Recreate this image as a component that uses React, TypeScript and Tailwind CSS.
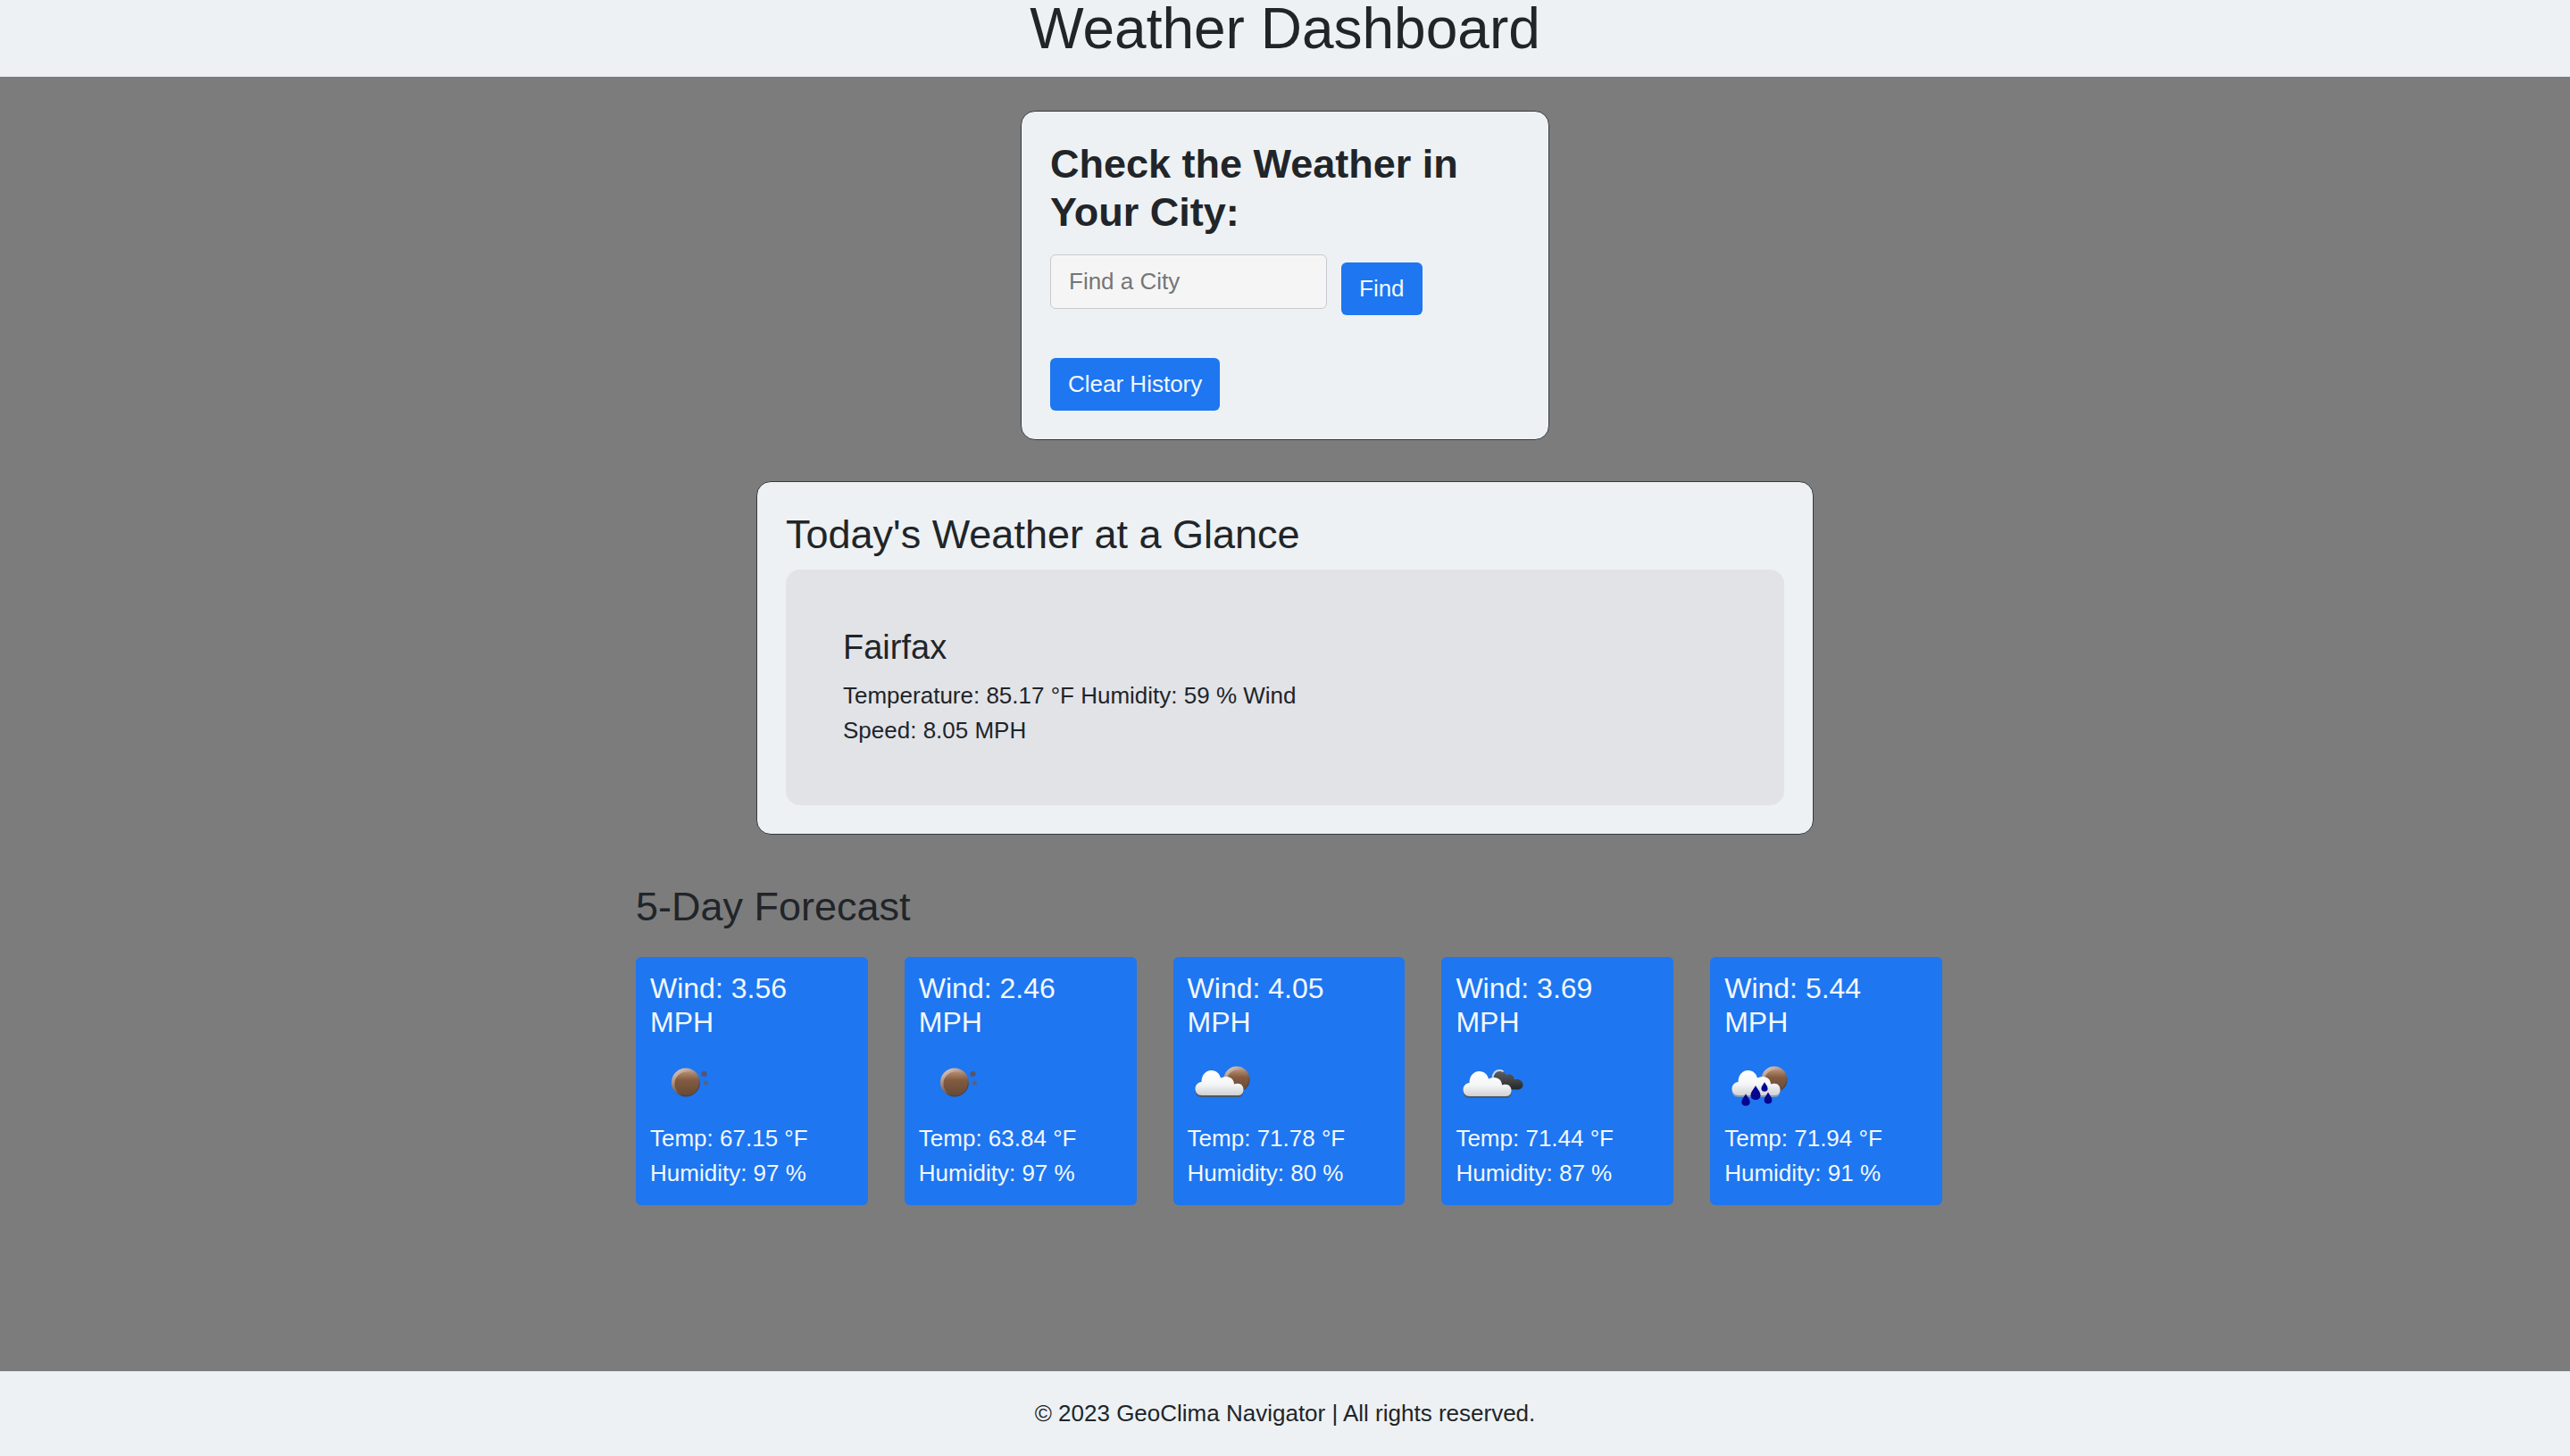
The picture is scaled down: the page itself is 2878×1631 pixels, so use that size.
import { useState } from "react";

type Sky = "clear" | "few" | "broken" | "rain";

const forecast: { wind: string; sky: Sky; label: string; temp: string; humidity: number }[] = [
  { wind: "3.56", sky: "clear", label: "Clear sky", temp: "67.15", humidity: 97 },
  { wind: "2.46", sky: "clear", label: "Clear sky", temp: "63.84", humidity: 97 },
  { wind: "4.05", sky: "few", label: "Few clouds", temp: "71.78", humidity: 80 },
  { wind: "3.69", sky: "broken", label: "Broken clouds", temp: "71.44", humidity: 87 },
  { wind: "5.44", sky: "rain", label: "Rain", temp: "71.94", humidity: 91 },
];

const CLOUD =
  "M16 55 C11 55 8.5 51.5 8.5 47.5 C8.5 43.5 11.5 40.5 15.5 40 C15.5 32.5 20 27 26.5 27 C32 27 35.5 30.5 37 35.5 C39 34.5 41 34 43 34 C48.5 34 52 38 52 42.5 C53 42 54.5 41.7 56 41.7 C60 41.7 62.5 44.5 62.5 48.5 C62.5 52 60.5 55 57 55 Z";

const DARK_CLOUD =
  "M43 48 C41.5 44 41 39 42.5 35 C43.5 30.5 46.5 28 50 28 C53.5 28 56 29.8 57 32.5 C58.2 31.3 59.8 31 61.500 31.500 C64 32.200 65.500 34.500 65.800 37.500 C70.500 36 75.500 39 75.500 43 C75.500 46.500 73 48.500 69 48.500 Z";

const DROP = "M0 -8 C2 -4 5.500 -1 5.500 3 C5.500 6.500 3 8 0 8 C-3 8 -5.500 6.500 -5.500 3 C-5.500 -1 -2 -4 0 -8 Z";

function Moon({ id, cx, cy, r }: { id: string; cx: number; cy: number; r: number }) {
  return (
    <g>
      <defs>
        <linearGradient id={`${id}-rim`} x1="0.1" y1="0" x2="0.6" y2="0.9">
          <stop offset="0" stopColor="#e6d3c8" />
          <stop offset="0.45" stopColor="#a98a78" />
          <stop offset="1" stopColor="#4e3a36" />
        </linearGradient>
        <linearGradient id={`${id}-face`} x1="0" y1="0" x2="0" y2="1">
          <stop offset="0" stopColor="#b58c6f" />
          <stop offset="0.35" stopColor="#835b40" />
          <stop offset="1" stopColor="#654936" />
        </linearGradient>
      </defs>
      <circle cx={cx} cy={cy} r={r} fill={`url(#${id}-rim)`} />
      <circle cx={cx + 1} cy={cy + 1.5} r={r - 2.5} fill={`url(#${id}-face)`} />
    </g>
  );
}

function Cloud({ id, wet }: { id: string; wet?: boolean }) {
  return (
    <g>
      <defs>
        <linearGradient id={`${id}-cloud`} x1="0" y1="0" x2="0" y2="1">
          <stop offset="0" stopColor="#ffffff" />
          <stop offset="0.55" stopColor="#f5f6f7" />
          <stop offset="1" stopColor="#cfd1d4" />
        </linearGradient>
      </defs>
      <path d={CLOUD} transform="translate(0 2)" fill={wet ? "#8299bd" : "#4d5768"} />
      <path d={CLOUD} fill={`url(#${id}-cloud)`} />
    </g>
  );
}

function WeatherIcon({ sky, id, label }: { sky: Sky; id: string; label: string }) {
  return (
    <svg viewBox="0 0 80 80" className="mt-2 mb-1 block size-20" role="img" aria-label={label}>
      {sky === "clear" && (
        <>
          <Moon id={id} cx={40} cy={40.5} r={16} />
          <circle cx="60.500" cy="31" r="3" fill="#5a5468" />
          <circle cx="62.500" cy="41" r="2.500" fill="#5c6080" />
        </>
      )}
      {sky === "few" && (
        <>
          <Moon id={id} cx={55} cy={37} r={14.5} />
          <Cloud id={id} />
        </>
      )}
      {sky === "broken" && (
        <>
          <defs>
            <linearGradient id={`${id}-dark`} x1="0" y1="0" x2="0" y2="1">
              <stop offset="0" stopColor="#5c5d5f" />
              <stop offset="0.6" stopColor="#3d3e40" />
              <stop offset="1" stopColor="#242628" />
            </linearGradient>
          </defs>
          <path d={DARK_CLOUD} fill={`url(#${id}-dark)`} />
          <path d="M41.500 36 C42 30 45 27 49.500 27 C51 27 52.500 27.500 53.500 28.500" fill="none" stroke="#cfd6de" strokeWidth="2" />
          <g transform="translate(0 1)">
            <Cloud id={id} />
          </g>
        </>
      )}
      {sky === "rain" && (
        <>
          <Moon id={id} cx={56} cy={37} r={14.5} />
          <Cloud id={id} wet />
          <g fill="#06068f">
            <path d={DROP} transform="translate(24 60) scale(0.85)" />
            <path d={DROP} transform="translate(35 52)" />
            <path d={DROP} transform="translate(45 45.500) scale(0.65)" />
            <path d={DROP} transform="translate(49 58) scale(0.8)" />
          </g>
        </>
      )}
    </svg>
  );
}

const BUTTON = "cursor-pointer rounded-md bg-[#1e76f0] px-5 leading-[39px] text-[#f2f8ff]";

export default function App() {
  const [city, setCity] = useState("");

  return (
    <div className="flex min-h-screen flex-col bg-[#7c7c7c] font-['Liberation_Sans',Arial,sans-serif] text-[26px] leading-[39px] text-[#212529]">
      <header className="bg-[#edf1f3] pb-[22px] text-center">
        <h1 className="text-[64px] leading-[64px]">Weather Dashboard</h1>
      </header>

      <main className="flex flex-1 flex-col items-center pt-[38px]">
        <section className="w-full max-w-[592px] rounded-2xl border border-[#343a40] bg-[#edf1f3] p-8">
          <form onSubmit={(e) => e.preventDefault()}>
            <label htmlFor="city" className="block text-[45px] leading-[54px] font-bold">
              Check the Weather in Your City:
            </label>
            <div className="mt-5 flex items-start gap-4">
              <input
                id="city"
                type="text"
                value={city}
                onChange={(e) => setCity(e.target.value)}
                placeholder="Find a City"
                className="h-[61px] w-[310px] rounded-md border border-[#c6cbcf] bg-[#f5f5f5] px-5 placeholder:text-[#737679]"
              />
              <button type="submit" className={`mt-[9px] py-[10px] ${BUTTON}`}>
                Find
              </button>
            </div>
            <button type="button" onClick={() => setCity("")} className={`mt-12 block py-[10px] ${BUTTON}`}>
              Clear History
            </button>
          </form>
        </section>

        <section className="mt-[46px] w-full max-w-[1184px] rounded-2xl border border-[#343a40] bg-[#edf1f3] p-8">
          <h2 className="mb-3 text-[45px] leading-[54px]">Today's Weather at a Glance</h2>
          <div className="rounded-2xl bg-[#e2e3e7] p-16">
            <h3 className="mb-3 text-[38px] leading-[46px]">Fairfax</h3>
            <p className="max-w-[559px]">Temperature: 85.17 °F Humidity: 59 % Wind Speed: 8.05 MPH</p>
          </div>
        </section>

        <section className="mt-[54px] w-full max-w-[1472px] pb-16 pl-[9px]">
          <h2 className="text-[45px] leading-[54px]">5-Day Forecast</h2>
          <ul className="mt-[29px] grid grid-cols-5 gap-[41px]">
            {forecast.map((day, i) => (
              <li key={i} className="rounded-md bg-[#1e76f0] p-4 text-[#f2f8ff]">
                <h3 className="text-[32px] leading-[38px]">Wind: {day.wind} MPH</h3>
                <WeatherIcon sky={day.sky} id={`day-${i}`} label={day.label} />
                <p>Temp: {day.temp} °F</p>
                <p>Humidity: {day.humidity} %</p>
              </li>
            ))}
          </ul>
        </section>
      </main>

      <footer className="bg-[#edf1f3] py-7 text-center">
        <p>© 2023 GeoClima Navigator | All rights reserved.</p>
      </footer>
    </div>
  );
}
